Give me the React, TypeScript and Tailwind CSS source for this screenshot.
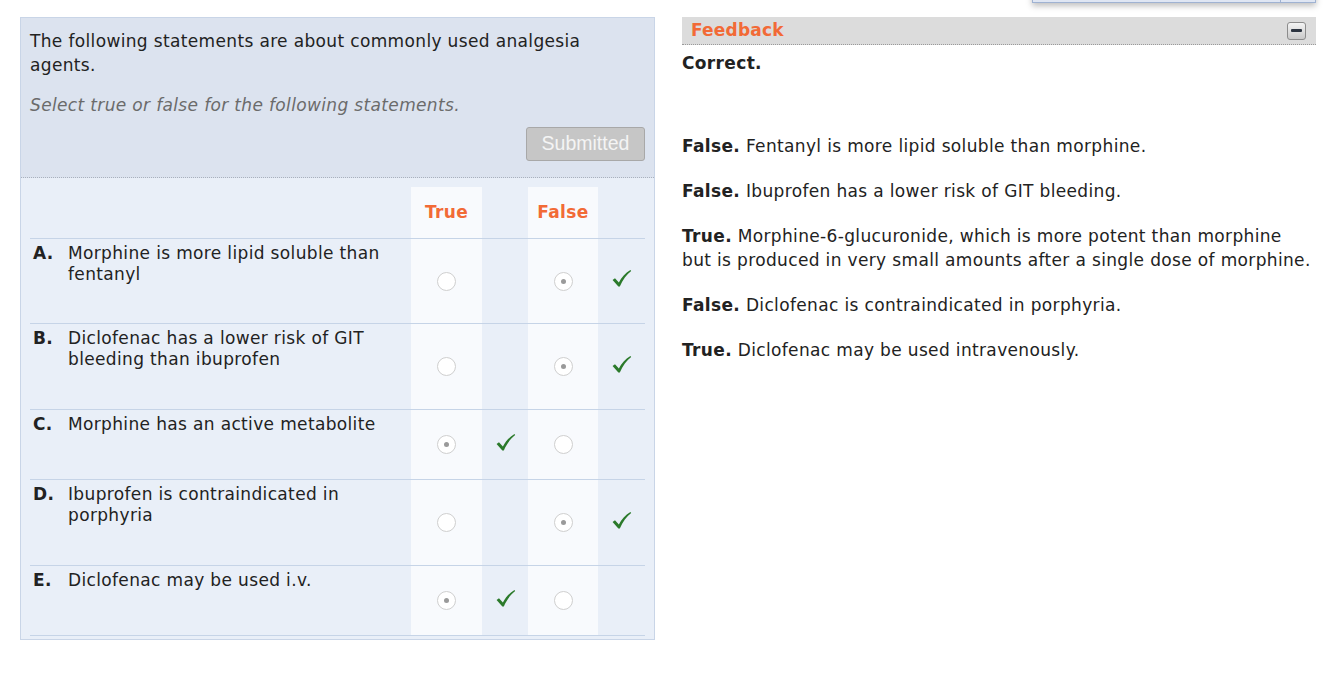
import React from "react";

type Row = {
  l: string;
  t: string;
  sel: "true" | "false";
  check: "true" | "false";
  h: string;
};

const rows: Row[] = [
  { l: "A.", t: "Morphine is more lipid soluble than fentanyl", sel: "false", check: "false", h: "h-[85px]" },
  { l: "B.", t: "Diclofenac has a lower risk of GIT bleeding than ibuprofen", sel: "false", check: "false", h: "h-[86px]" },
  { l: "C.", t: "Morphine has an active metabolite", sel: "true", check: "true", h: "h-[70px]" },
  { l: "D.", t: "Ibuprofen is contraindicated in porphyria", sel: "false", check: "false", h: "h-[86px]" },
  { l: "E.", t: "Diclofenac may be used i.v.", sel: "true", check: "true", h: "h-[70px]" },
];

const feedback: { k: string; t: string }[] = [
  { k: "False.", t: "Fentanyl is more lipid soluble than morphine." },
  { k: "False.", t: "Ibuprofen has a lower risk of GIT bleeding." },
  { k: "True.", t: "Morphine-6-glucuronide, which is more potent than morphine but is produced in very small amounts after a single dose of morphine." },
  { k: "False.", t: "Diclofenac is contraindicated in porphyria." },
  { k: "True.", t: "Diclofenac may be used intravenously." },
];

function Radio({ on }: { on: boolean }) {
  return (
    <div className="w-[19px] h-[19px] rounded-full border border-[#cfcfcf] bg-white flex items-center justify-center">
      {on && <div className="w-[5px] h-[5px] rounded-full bg-[#9a9a9a]" />}
    </div>
  );
}

function Check() {
  return (
    <svg width="21" height="19" viewBox="0 0 20 18">
      <path d="M1.5 10.5 L3.8 8.8 L7.5 12.8 C10 8 13.5 4 18.5 1 L19.2 1.9 C14.8 5.5 11.2 10 8.4 16.6 L7 16.6 Z" fill="#2b7a2b" />
    </svg>
  );
}

export default function App() {
  return (
    <div
      className="relative w-[1334px] h-[692px] bg-white overflow-hidden text-[#222] tracking-[0.35px]"
      style={{ fontFamily: '"DejaVu Sans", Verdana, sans-serif' }}
    >
      {/* cut-off dropdown at top right */}
      <div className="absolute left-[1032px] top-[-30px] w-[284px] h-[33px] bg-[#dfe6f3] border border-[#9fb2d2] shadow-[0_3px_6px_rgba(0,0,0,0.25)] flex">
        <div className="flex-1" />
        <div className="w-[35px] border-l border-[#9fb2d2]" />
      </div>

      <div className="flex items-start pt-[17px] pl-[20px]">
        {/* Left panel */}
        <div className="w-[635px] h-[623px] border border-[#c9d5e7] bg-[#e9eff8] flex flex-col">
          <div className="bg-[#dce3ef] border-b border-dotted border-[#a9b1bd] px-[9px] pt-[11px] pb-[16px]">
            <p className="text-[17px] leading-[24px] text-[#222] pr-[50px]">
              The following statements are about commonly used analgesia agents.
            </p>
            <p className="mt-[16px] text-[17px] leading-[24px] italic text-[#6b6b6b]">
              Select true or false for the following statements.
            </p>
            <div className="flex justify-end mt-[10px]">
              <div
                className="w-[119px] h-[34px] rounded-[3px] bg-[#c6c6c6] border border-[#a8a8a8] text-[#f4f4f4] text-[19.5px] tracking-normal flex items-center justify-center"
                style={{ fontFamily: '"Liberation Sans", Arial, sans-serif' }}
              >
                Submitted
              </div>
            </div>
          </div>

          <div className="pl-[9px] pr-[9px] pt-[9px]">
            {/* header row */}
            <div className="grid grid-cols-[381px_71px_46px_70px_47px] h-[51px]">
              <div />
              <div className="bg-[#f8fafd] flex items-center justify-center text-[#f26a36] font-bold text-[17px]">True</div>
              <div />
              <div className="bg-[#f8fafd] flex items-center justify-center text-[#f26a36] font-bold text-[17px]">False</div>
              <div />
            </div>
            {rows.map((r) => (
              <div
                key={r.l}
                className={`grid grid-cols-[381px_71px_46px_70px_47px] border-t border-[#c6d4e7] ${r.h}`}
              >
                <div className="flex pt-[4px] pl-[3px] text-[17px] leading-[21px]">
                  <span className="w-[35px] shrink-0 font-bold">{r.l}</span>
                  <span className="pr-[8px]">{r.t}</span>
                </div>
                <div className="bg-[#f8fafd] flex items-center justify-center">
                  <Radio on={r.sel === "true"} />
                </div>
                <div className="flex items-center justify-center pb-[5px]">
                  {r.check === "true" && <Check />}
                </div>
                <div className="bg-[#f8fafd] flex items-center justify-center">
                  <Radio on={r.sel === "false"} />
                </div>
                <div className="flex items-center justify-center pb-[5px]">
                  {r.check === "false" && <Check />}
                </div>
              </div>
            ))}
            <div className="border-t border-[#c6d4e7]" />
          </div>
        </div>

        {/* Right panel */}
        <div className="ml-[27px] w-[634px]">
          <div className="h-[28px] bg-[#dcdcdc] border-b border-dotted border-[#9a9a9a] flex items-center justify-between pl-[9px] pr-[10px]">
            <span className="text-[#f26a36] font-bold text-[17px] leading-none tracking-[0.2px]">Feedback</span>
            <div className="w-[19px] h-[18px] rounded-[3px] border border-[#8c8c8c] bg-gradient-to-b from-[#f4f4f4] to-[#c9c9c9] flex items-center justify-center">
              <div className="w-[11px] h-[3px] bg-[#2c3440] rounded-[1px]" />
            </div>
          </div>
          <p className="mt-[6px] font-bold text-[17px] leading-[24px]">Correct.</p>
          <div className="mt-[59px] flex flex-col gap-[21px]">
            {feedback.map((f, i) => (
              <p key={i} className="text-[17px] leading-[24px]">
                <span className="font-bold">{f.k}</span> {f.t}
              </p>
            ))}
          </div>
        </div>
      </div>
    </div>
  );
}
